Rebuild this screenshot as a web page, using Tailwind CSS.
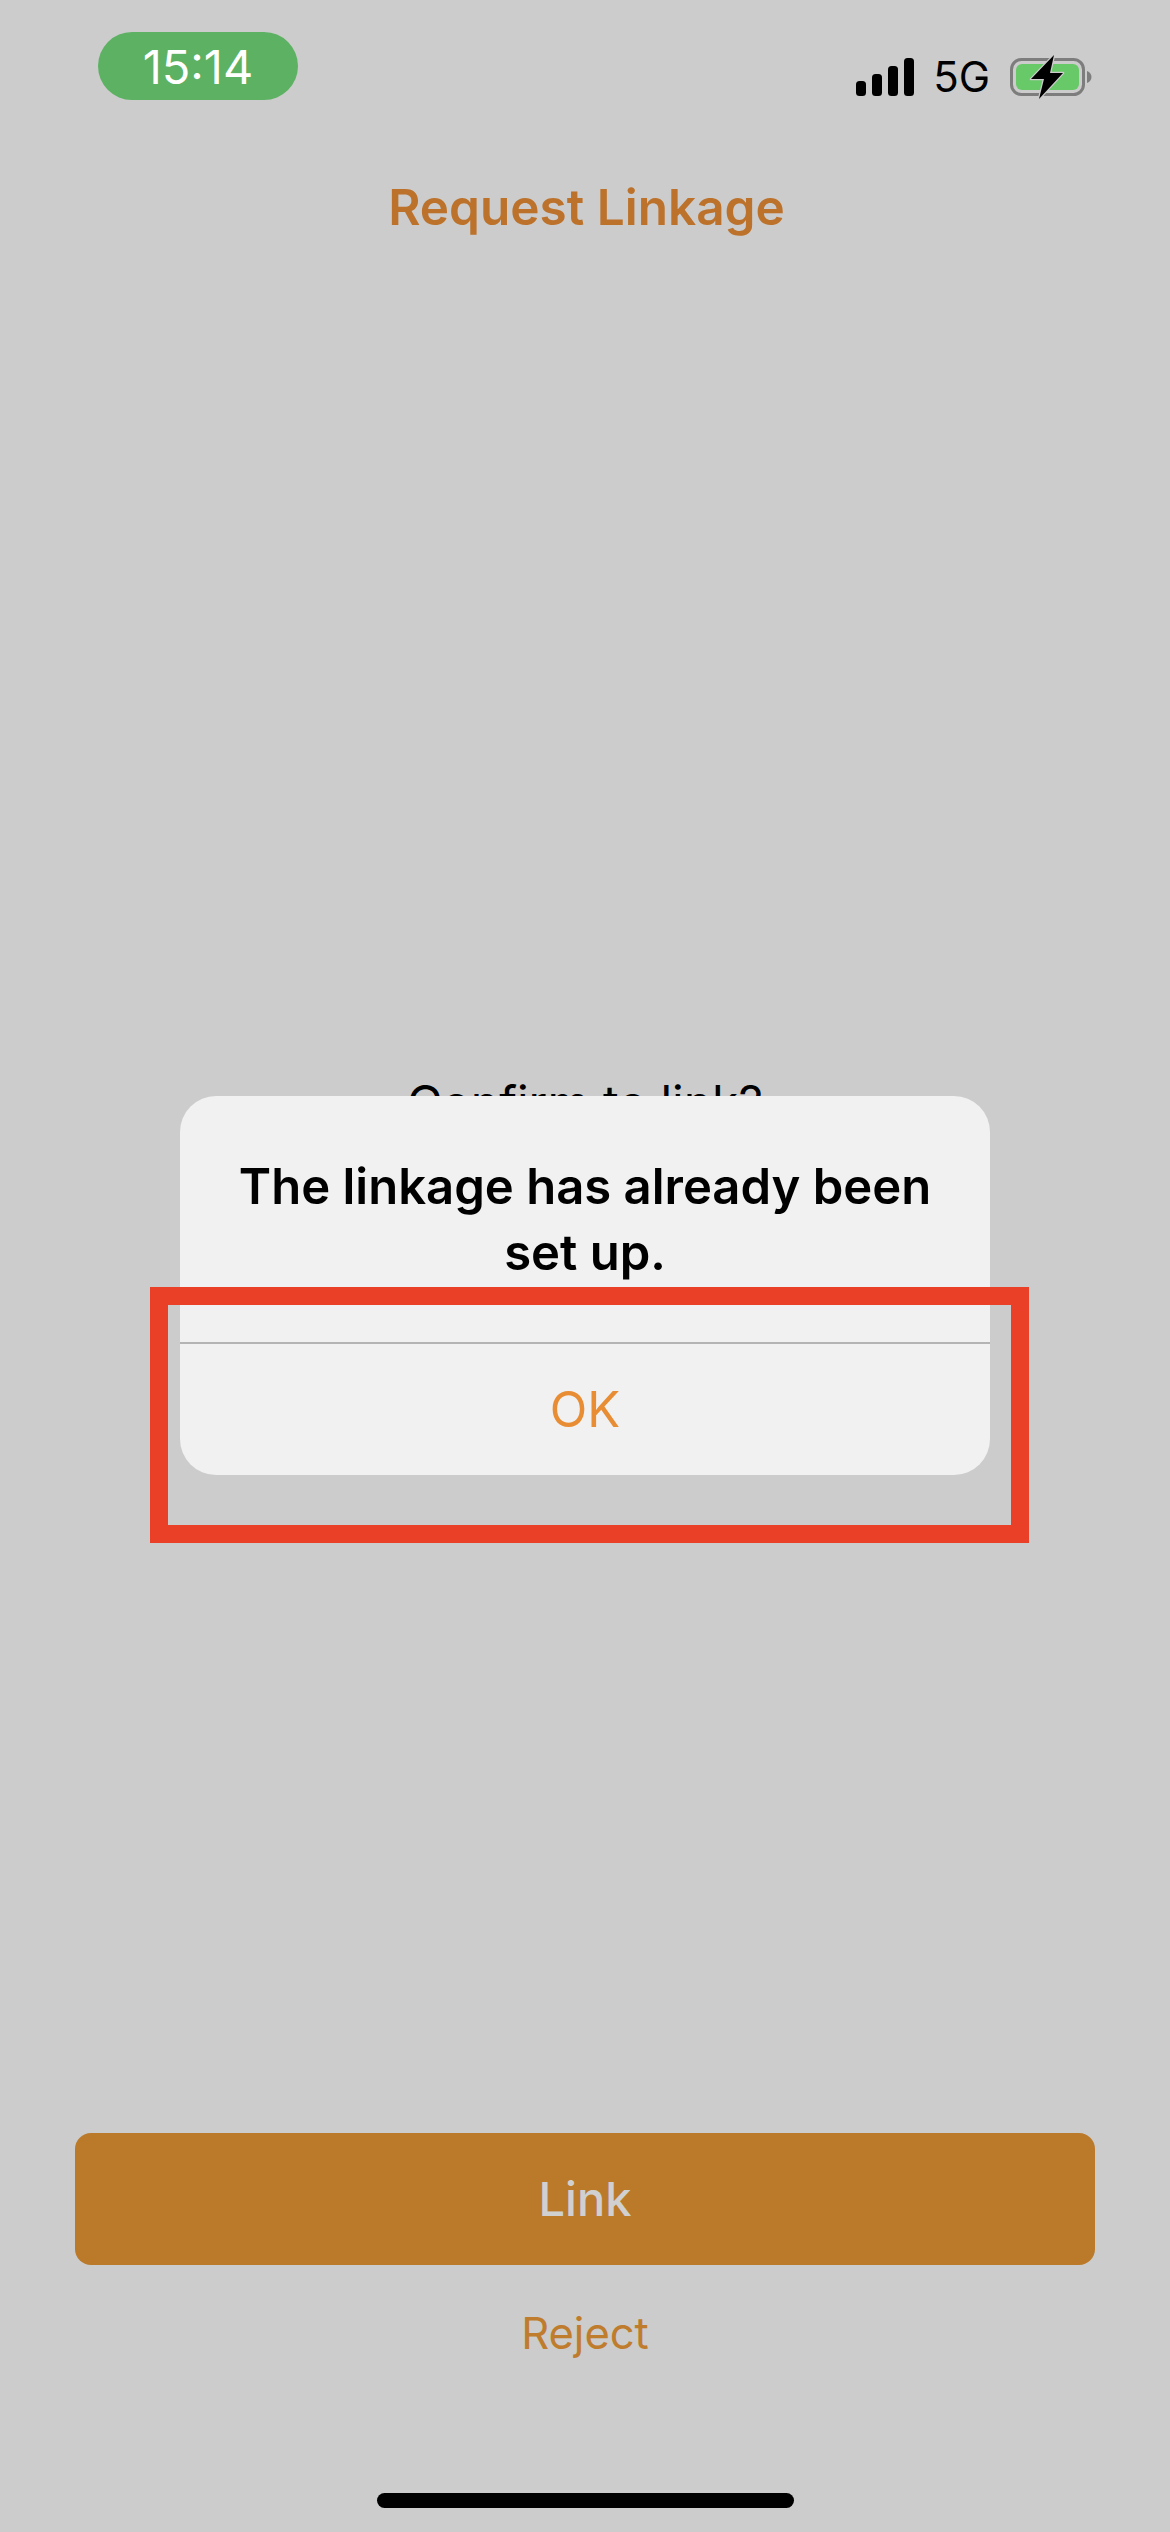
<!DOCTYPE html>
<html lang="en">
<head>
    <meta charset="UTF-8">
    <meta name="viewport" content="width=device-width, initial-scale=1.0">
    <title>Request Linkage</title>
    <script src="https://cdn.jsdelivr.net/npm/@tailwindcss/browser@4"></script>
</head>
<body class="bg-[#cccccc] font-['Inter',sans-serif]">

    <div class="relative w-[1170px] h-[2532px] overflow-hidden flex flex-col bg-[#cccccc]">

        <!-- Status bar -->
        <div class="flex justify-between items-start pt-[32px] pl-[98px] pr-[78px] h-[170px]">
            <div class="w-[200px] h-[68px] rounded-full bg-[#5cb162] flex items-center justify-center text-white text-[47px] leading-none">15:14</div>
            <div class="flex items-center mt-[26px] h-[38px]">
                <svg class="w-[60px] h-[38px]" viewBox="0 0 60 38">
                    <rect x="2" y="23" width="10" height="15" rx="3.5" fill="#000"/>
                    <rect x="18" y="16" width="10" height="22" rx="3.5" fill="#000"/>
                    <rect x="34" y="8" width="10" height="30" rx="3.5" fill="#000"/>
                    <rect x="50" y="0" width="10" height="38" rx="3.5" fill="#000"/>
                </svg>
                <span class="ml-[19px] text-[42px] leading-none text-black">5G</span>
                <svg class="ml-[20px] w-[82px] h-[46px]" viewBox="0 0 82 46">
                    <rect x="1.5" y="5.5" width="72" height="35" rx="10" fill="none" stroke="#7d7d7d" stroke-width="3"/>
                    <rect x="6" y="10" width="63" height="26" rx="6" fill="#68c969"/>
                    <path d="M77 17c3 1 4.500 3.500 4.500 6s-1.500 5-4.500 6z" fill="#7d7d7d"/>
                    <path d="M44 1L21 25h13l-5 20 24-26H40z" fill="#000" stroke="#cccccc" stroke-width="2.500" stroke-linejoin="round" paint-order="stroke"/>
                </svg>
            </div>
        </div>

        <!-- Title -->
        <h1 class="text-center pl-[3px] text-[#bc722b] text-[49.5px] leading-[74px] font-semibold">Request Linkage</h1>

        <!-- Content -->
        <div class="flex-1 flex flex-col items-center pt-[829px]">
            <p class="text-[48px] leading-[60px] text-black">Confirm to link?</p>
        </div>

        <!-- Actions -->
        <div class="flex flex-col items-center px-[75px]">
            <button class="w-full h-[132px] rounded-[16px] bg-[#bb7a2a] text-[#d0d0d0] text-[47px] font-medium">Link</button>
            <button class="mt-[38px] text-[#bf7c2c] text-[43.5px] leading-[60px]">Reject</button>
        </div>

        <!-- Home indicator -->
        <div class="flex justify-center pt-[130px] pb-[24px]">
            <div class="w-[417px] h-[15px] rounded-full bg-black"></div>
        </div>

        <!-- Alert -->
        <div class="absolute left-[180px] top-[1096px] w-[810px] h-[379px] rounded-[36px] bg-[#f1f1f1] flex flex-col">
            <div class="h-[246px] pt-[58px] px-[40px] text-center text-black text-[49px] leading-[66px] font-semibold">The linkage has already been set up.</div>
            <div class="flex-1 border-t-2 border-[#b4b4b4] flex items-center justify-center text-[#e88d33] text-[49px]">OK</div>
        </div>

        <!-- Annotation frame -->
        <div class="absolute left-[150px] top-[1287px] w-[879px] h-[256px] border-[18px] border-[#ea4027]"></div>
    </div>

</body>
</html>
